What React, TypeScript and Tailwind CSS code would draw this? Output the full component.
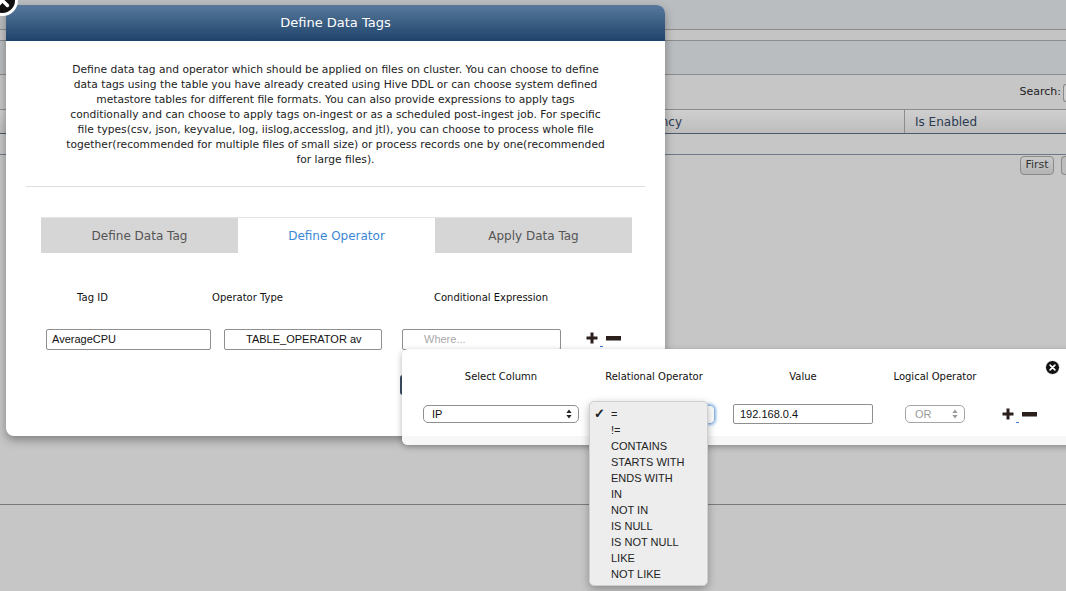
import React from 'react';

const DESC = [
  'Define data tag and operator which should be applied on files on cluster. You can choose to define',
  'data tags using the table you have already created using Hive DDL or can choose system defined',
  'metastore tables for different file formats. You can also provide expressions to apply tags',
  'conditionally and can choose to apply tags on-ingest or as a scheduled post-ingest job. For specific',
  'file types(csv, json, keyvalue, log, iislog,accesslog, and jtl), you can choose to process whole file',
  'together(recommended for multiple files of small size) or process records one by one(recommended',
  'for large files).',
];

const OPS = ['=', '!=', 'CONTAINS', 'STARTS WITH', 'ENDS WITH', 'IN', 'NOT IN', 'IS NULL', 'IS NOT NULL', 'LIKE', 'NOT LIKE'];

function CloseIcon({ size, ring }: { size: number; ring: number }) {
  const r = size / 2;
  const k = size * 0.16;
  return (
    <svg width={size} height={size} viewBox={`0 0 ${size} ${size}`}>
      <circle cx={r} cy={r} r={r - ring / 2} fill="#111" stroke="#fff" strokeWidth={ring} />
      <path
        d={`M${r - k} ${r - k}L${r + k} ${r + k}M${r + k} ${r - k}L${r - k} ${r + k}`}
        stroke="#fff"
        strokeWidth={size * 0.11}
        strokeLinecap="round"
      />
    </svg>
  );
}

function PlusMinus() {
  return (
    <div className="flex items-center">
      <svg width="12" height="12" viewBox="0 0 12 12">
        <path d="M4.5 0.5h3v4h4v3h-4v4h-3v-4h-4v-3h4z" fill="#2b1f1c" />
      </svg>
      <span className="ml-[2px] mt-[16px] h-px w-[3px] bg-[#3b7bd4]" />
      <svg width="15" height="5" viewBox="0 0 15 5" className="ml-[3px] mt-[1px]">
        <rect x="0" y="0" width="15" height="4.5" fill="#2b1f1c" />
      </svg>
    </div>
  );
}

function Arrows({ color }: { color: string }) {
  return (
    <svg width="6" height="10" viewBox="0 0 6 10">
      <path d="M3 0.5L5.6 4H0.4z" fill={color} />
      <path d="M3 9.5L5.6 6H0.4z" fill={color} />
    </svg>
  );
}

export default function App() {
  return (
    <div className="relative h-[591px] w-[1066px] overflow-hidden bg-[#c6c6c6] font-['DejaVu_Sans',sans-serif]">
      {/* page behind the dialog */}
      <div className="h-[30px] border-b border-[#8c8c8c] bg-[#babdbf]" />
      <div className="h-[11px] border-b border-[#8c8c8c] bg-[#c4c4c4]" />
      <div className="h-[34px] border-b border-[#8c8c8c] bg-[#babdbf]" />
      <div className="flex h-[34px] items-center justify-end pt-[1px]">
        <span className="text-[11px] text-[#222]">Search:</span>
        <div className="ml-[2px] h-[18px] w-[3px] rounded-l-[3px] border border-r-0 border-[#8a8a8a] bg-[#d0d0d0]" />
      </div>
      <div className="flex h-[25px] border-y border-y-[#8c8c8c] border-b-[#4d5a6b] bg-gradient-to-b from-[#cfcfcf] to-[#bdbdbd] text-[12px] text-[#2b3b52]">
        <div className="flex w-[905px] items-center border-r border-[#8c8c8c] pl-[620px]">Frequency</div>
        <div className="flex items-center pl-[10px]">Is Enabled</div>
      </div>
      <div className="h-[21px] border-b border-[#6e7887]" />
      <div className="flex h-[350px] justify-end gap-[7px] border-b border-[#7a7a7a] pt-[1px]">
        <div className="flex h-[19px] w-[34px] items-center justify-center rounded-[4px] border border-[#8a8a8a] bg-gradient-to-b from-[#c9c9c9] to-[#b4b4b4] text-[11px] text-[#333]">
          First
        </div>
        <div className="h-[19px] w-[5px] rounded-l-[4px] border border-r-0 border-[#8a8a8a] bg-[#bcbcbc]" />
      </div>

      {/* dialog */}
      <div className="absolute left-[6px] top-[5px] h-[431px] w-[659px] rounded-[8px] bg-white shadow-[0_4px_10px_rgba(0,0,0,0.35)]">
        <div className="flex h-[36px] items-center justify-center rounded-t-[8px] bg-gradient-to-b from-[#58799c] to-[#1e436b] text-[13px] text-white">
          Define Data Tags
        </div>
        <div className="flex flex-col items-center pt-[21px] text-[10.7px] leading-[15px] text-[#222]">
          {DESC.map((l) => (
            <div key={l} className="whitespace-nowrap">
              {l}
            </div>
          ))}
        </div>
        <div className="mx-[20px] mt-[19px] h-px bg-[#dedede]" />

        <div className="ml-[35px] mt-[30px] flex h-[36px] w-[591px] border-t border-[#e4e4e4] text-[12px]">
          <div className="flex w-[197px] items-center justify-center bg-[#d6d6d6] text-[#555]">Define Data Tag</div>
          <div className="flex w-[197px] items-center justify-center bg-white text-[#3a88d6]">Define Operator</div>
          <div className="flex w-[197px] items-center justify-center bg-[#d6d6d6] text-[#555]">Apply Data Tag</div>
        </div>

        <div className="ml-[40px] mt-[37px] flex text-[10px] text-[#111]">
          <div className="w-[93px] text-center">Tag ID</div>
          <div className="ml-[51px] w-[115px] text-center">Operator Type</div>
          <div className="ml-[105px] w-[162px] text-center">Conditional Expression</div>
        </div>

        <div className="ml-[40px] mt-[24px] flex items-center font-['Liberation_Sans',sans-serif] text-[11px]">
          <div className="flex h-[21px] w-[165px] items-center rounded-[2px] border border-[#8f8f8f] pl-[5px] text-[#111]">
            AverageCPU
          </div>
          <div className="ml-[13px] flex h-[21px] w-[158px] items-center overflow-hidden whitespace-nowrap rounded-[2px] border border-[#8f8f8f] pl-[21px] text-[#111]">
            TABLE_OPERATOR av
          </div>
          <div className="ml-[20px] flex h-[21px] w-[159px] items-center rounded-[2px] border border-[#8f8f8f] pl-[21px] text-[#a9a9a9]">
            Where...
          </div>
          <div className="ml-[25px] -mt-[3px]">
            <PlusMinus />
          </div>
        </div>
      </div>
      <div className="absolute left-[-13px] top-[-15px]">
        <CloseIcon size={31} ring={3} />
      </div>

      {/* hidden relational select edge in the dialog */}
      <div className="absolute left-[400px] top-[375px] h-[20px] w-[12px] rounded-l-[3px] border-l-[3px] border-[#3e4f66] bg-[#eef2f6]" />

      {/* condition builder */}
      <div className="absolute left-[402px] top-[349px] h-[96px] w-[680px] overflow-hidden rounded-[6px] bg-white shadow-[0_2px_6px_rgba(0,0,0,0.3)]">
        <div className="flex pl-[10px] pt-[20px] text-[10px] text-[#111]">
          <div className="w-[178px] text-center">Select Column</div>
          <div className="w-[128px] text-center">Relational Operator</div>
          <div className="w-[170px] text-center">Value</div>
          <div className="w-[94px] text-center">Logical Operator</div>
        </div>
        <div className="mt-[20px] flex h-[20px] items-center pl-[10px] font-['Liberation_Sans',sans-serif] text-[11px]">
          <div className="flex w-[178px] justify-center">
            <div className="flex h-[18px] w-[156px] items-center justify-between rounded-[5px] border border-[#8f8f8f] pl-[8px] pr-[6px] text-[#111]">
              IP
              <Arrows color="#222" />
            </div>
          </div>
          <div className="flex w-[128px] justify-center">
            <div className="h-[19px] w-[122px] rounded-[5px] border border-[#8fb3dc] shadow-[0_0_3px_1px_rgba(80,150,230,0.7)]" />
          </div>
          <div className="flex w-[170px] justify-center">
            <div className="flex h-[20px] w-[140px] items-center rounded-[2px] border border-[#8f8f8f] pl-[6px] text-[#111]">
              192.168.0.4
            </div>
          </div>
          <div className="flex w-[94px] justify-center">
            <div className="flex h-[18px] w-[60px] items-center justify-between rounded-[5px] border border-[#a5a5a5] pl-[9px] pr-[6px] text-[#9a9a9a]">
              OR
              <Arrows color="#9a9a9a" />
            </div>
          </div>
          <div className="flex w-[70px] justify-center pl-[4px]">
            <PlusMinus />
          </div>
        </div>
        <div className="mt-[12px] h-[20px] bg-[#f7f7f7]" />
      </div>
      <div className="absolute left-[1045px] top-[360px]">
        <CloseIcon size={15} ring={1} />
      </div>

      {/* open operator list */}
      <div className="absolute left-[589px] top-[401px] w-[119px] rounded-[5px] border border-[#cfcfcf] bg-[#ededed] pb-[3px] pt-[4px] font-['Liberation_Sans',sans-serif] text-[11px] leading-[16px] text-[#222] shadow-[0_3px_8px_rgba(0,0,0,0.3)]">
        {OPS.map((op, i) => (
          <div key={op} className="relative pl-[21px]">
            {i === 0 && <span className="absolute left-[4px] top-0 text-[13px] font-bold">✓</span>}
            {op}
          </div>
        ))}
      </div>
    </div>
  );
}
